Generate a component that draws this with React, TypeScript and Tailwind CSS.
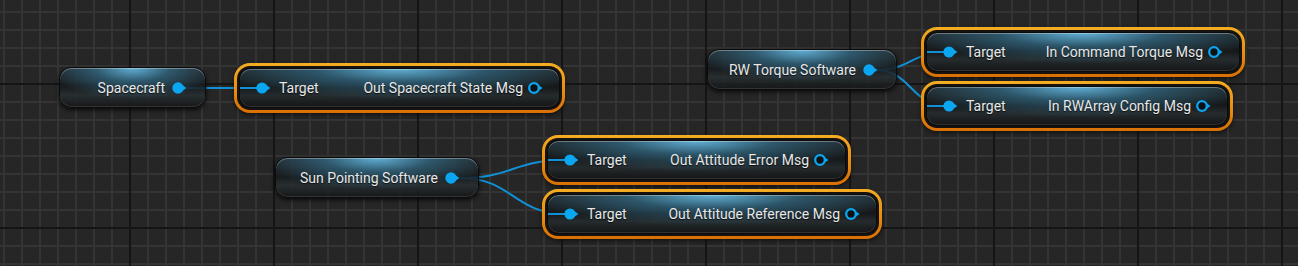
import React from "react";

const PIN = "#0aa6f0";
const WIRE = "#1190d6";

function InPin() {
  return (
    <svg width="31" height="12" viewBox="0 0 31 12" className="shrink-0">
      <line x1="0" y1="6" x2="18" y2="6" stroke={WIRE} strokeWidth="2" />
      <circle cx="22" cy="6" r="5.6" fill={PIN} />
      <path d="M26.6 3.3 L30.4 6 L26.6 8.7 Z" fill={PIN} />
    </svg>
  );
}

function OutPinHollow() {
  return (
    <svg width="16" height="12" viewBox="0 0 16 12" className="shrink-0">
      <circle cx="6" cy="6" r="4.8" fill="#0e1113" stroke={PIN} strokeWidth="2.3" />
      <path d="M10.8 3.4 L14.6 6 L10.8 8.6 Z" fill={PIN} />
    </svg>
  );
}

function OutPinFilled() {
  return (
    <svg width="16" height="12" viewBox="0 0 16 12" className="shrink-0">
      <circle cx="6" cy="6" r="5.7" fill={PIN} />
      <path d="M10.6 3.3 L14.4 6 L10.6 8.7 Z" fill={PIN} />
    </svg>
  );
}

function Body({ children, className = "" }: { children: React.ReactNode; className?: string }) {
  return (
    <div
      className={`relative overflow-hidden border border-[#0b0b0b] bg-[linear-gradient(to_bottom,rgba(34,42,46,0.86)_0%,rgba(22,26,28,0.86)_48%,rgba(40,47,50,0.86)_70%,rgba(20,21,22,0.9)_100%)] ${className}`}
    >
      <div className="pointer-events-none absolute inset-0 bg-[radial-gradient(ellipse_58%_80%_at_50%_0%,rgba(100,182,222,0.95)_0%,rgba(58,128,162,0.55)_45%,rgba(30,60,75,0)_100%)]" />
      <div className="pointer-events-none absolute inset-0 rounded-[inherit] shadow-[inset_0_1px_0_rgba(255,255,255,0.32),inset_0_-1px_0_rgba(255,255,255,0.12)]" />
      <div className="relative flex h-full items-center">{children}</div>
    </div>
  );
}

const label =
  "whitespace-nowrap text-[14px] leading-none text-[#e8e8e8] [text-shadow:0_1px_1px_rgba(0,0,0,0.7)]";

function MsgNode({ pos, right }: { pos: string; right: string }) {
  return (
    <div
      className={`absolute rounded-[16px] bg-[linear-gradient(to_bottom,#f4ad22_0%,#e68c10_55%,#d96f03_100%)] p-[3px] shadow-[0_2px_4px_rgba(0,0,0,0.5)] ${pos}`}
    >
      <div className="rounded-[13px] bg-[#15120f] p-[2px]">
        <Body className="h-[40px] rounded-[11px]">
          <div className="flex w-full items-center justify-between pr-[15px]">
            <div className="flex items-center">
              <InPin />
              <span className={`ml-2 ${label}`}>Target</span>
            </div>
            <div className="flex items-center gap-[5px]">
              <span className={label}>{right}</span>
              <OutPinHollow />
            </div>
          </div>
        </Body>
      </div>
    </div>
  );
}

function ObjNode({ pos, text }: { pos: string; text: string }) {
  return (
    <div className={`absolute rounded-[12px] shadow-[0_2px_4px_rgba(0,0,0,0.75)] ${pos}`}>
      <Body className="h-[41px] rounded-[12px]">
        <div className="flex w-full items-center justify-end gap-[7px] pr-[17px]">
          <span className={label}>{text}</span>
          <OutPinFilled />
        </div>
      </Body>
    </div>
  );
}

export default function App() {
  return (
    <div
      className="relative h-[266px] w-[1298px] overflow-hidden bg-[#262626] [background-image:repeating-linear-gradient(to_right,transparent_0_129px,#151515_129px_131px,transparent_131px_144px),repeating-linear-gradient(to_bottom,transparent_0_83px,#151515_83px_85px,transparent_85px_144px),repeating-linear-gradient(to_right,transparent_0_3px,#343434_3px_5px,transparent_5px_18px),repeating-linear-gradient(to_bottom,transparent_0_11px,#343434_11px_13px,transparent_13px_18px)]"
      style={{ fontFamily: "Roboto, 'Noto Sans', sans-serif" }}
    >
      <svg className="absolute inset-0 h-full w-full" width="1298" height="266" fill="none">
        <path d="M186 88 L262 88" stroke={WIRE} strokeWidth="2" />
        <path d="M876 70 C 911 70, 911 52, 947 52" stroke={WIRE} strokeWidth="2" />
        <path d="M876 70 C 911 70, 911 106, 947 106" stroke={WIRE} strokeWidth="2" />
        <path d="M460 178 C 513 178, 513 160, 567 160" stroke={WIRE} strokeWidth="2" />
        <path d="M460 178 C 513 178, 513 214, 567 214" stroke={WIRE} strokeWidth="2" />
      </svg>

      <ObjNode pos="left-[59px] top-[67px] w-[147px]" text="Spacecraft" />
      <ObjNode pos="left-[707px] top-[49px] w-[190px]" text="RW Torque Software" />
      <ObjNode pos="left-[275px] top-[157px] w-[204px]" text="Sun Pointing Software" />

      <MsgNode pos="left-[234px] top-[63px] w-[331px]" right="Out Spacecraft State Msg" />
      <MsgNode pos="left-[921px] top-[27px] w-[324px]" right="In Command Torque Msg" />
      <MsgNode pos="left-[921px] top-[81px] w-[312px]" right="In RWArray Config Msg" />
      <MsgNode pos="left-[542px] top-[135px] w-[309px]" right="Out Attitude Error Msg" />
      <MsgNode pos="left-[542px] top-[189px] w-[340px]" right="Out Attitude Reference Msg" />
    </div>
  );
}
